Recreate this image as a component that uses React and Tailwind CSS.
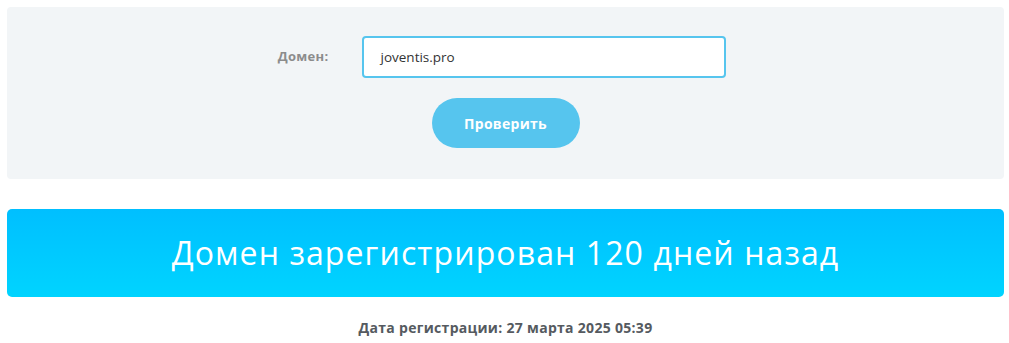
export default function App() {
  const font = { fontFamily: '"Open Sans", "Noto Sans", sans-serif' };
  return (
    <div className="w-[1009px] h-[343px] bg-white pt-[7px] pl-[7px] pr-[5px] flex flex-col" style={font}>
      <div className="shrink-0 h-[172px] bg-[#f2f5f7] rounded-[4px] flex flex-col items-center pt-[29px]">
        <div className="flex items-center justify-center w-full">
          <div className="w-[100px] text-right text-[13px] font-bold text-[#8c8c8c] tracking-[0.3px]">Домен:</div>
          <div className="w-[33px]" />
          <div className="w-[364px] h-[42px] bg-white border-2 border-[#56c5ee] rounded-[4px] flex items-center pl-[17px] text-[13.5px] text-[#333]">
            joventis.pro
          </div>
          <div className="w-[57px]" />
        </div>
        <button className="mt-[20px] w-[148px] h-[50px] rounded-full bg-[#56c5ee] text-white text-[14px] font-bold tracking-[0.3px]">
          Проверить
        </button>
      </div>
      <div className="shrink-0 mt-[30px] h-[88px] rounded-[5px] bg-gradient-to-b from-[#00bfff] to-[#00d4ff] flex items-center justify-center text-white text-[32px] font-normal tracking-[1.1px]">
        Домен зарегистрирован 120 дней назад
      </div>
      <div className="shrink-0 mt-[20px] text-center text-[14px] font-bold text-[#555a60] tracking-[0.3px]">
        Дата регистрации: 27 марта 2025 05:39
      </div>
    </div>
  );
}
